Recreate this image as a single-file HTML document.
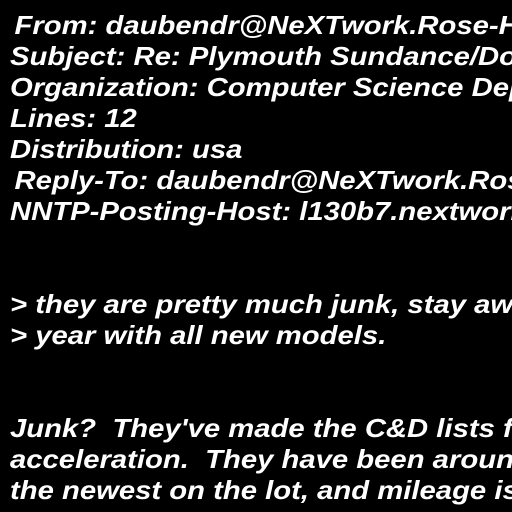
<!DOCTYPE html>
<html><head><meta charset="utf-8"><style>
html,body{margin:0;padding:0;background:#000;width:512px;height:512px;overflow:hidden}
.w{position:absolute;left:0;top:0;width:512px;height:512px;overflow:hidden}
pre{margin:0;position:absolute;left:10px;top:10px;color:#fff;font:italic bold 26px/31px "Liberation Sans",sans-serif;white-space:pre;transform:scaleX(1.125);transform-origin:0 0;width:460px;overflow:hidden}
.i{padding-left:4px}
</style></head><body><div class="w"><pre><span class="i">From: daubendr@NeXTwork.Rose-Hulman.Edu</span>
Subject: Re: Plymouth Sundance/Dodge Shadow
Organization: Computer Science Department
Lines: 12
Distribution: usa
<span class="i">Reply-To: daubendr@NeXTwork.Rose-Hulman.Edu</span>
NNTP-Posting-Host: l130b7.nextwork.rose-hulman.edu


&gt; they are pretty much junk, stay away from them.
&gt; year with all new models.


Junk?  They've made the C&amp;D lists for
acceleration.  They have been around for years,
the newest on the lot, and mileage is good.</pre></div></body></html>
